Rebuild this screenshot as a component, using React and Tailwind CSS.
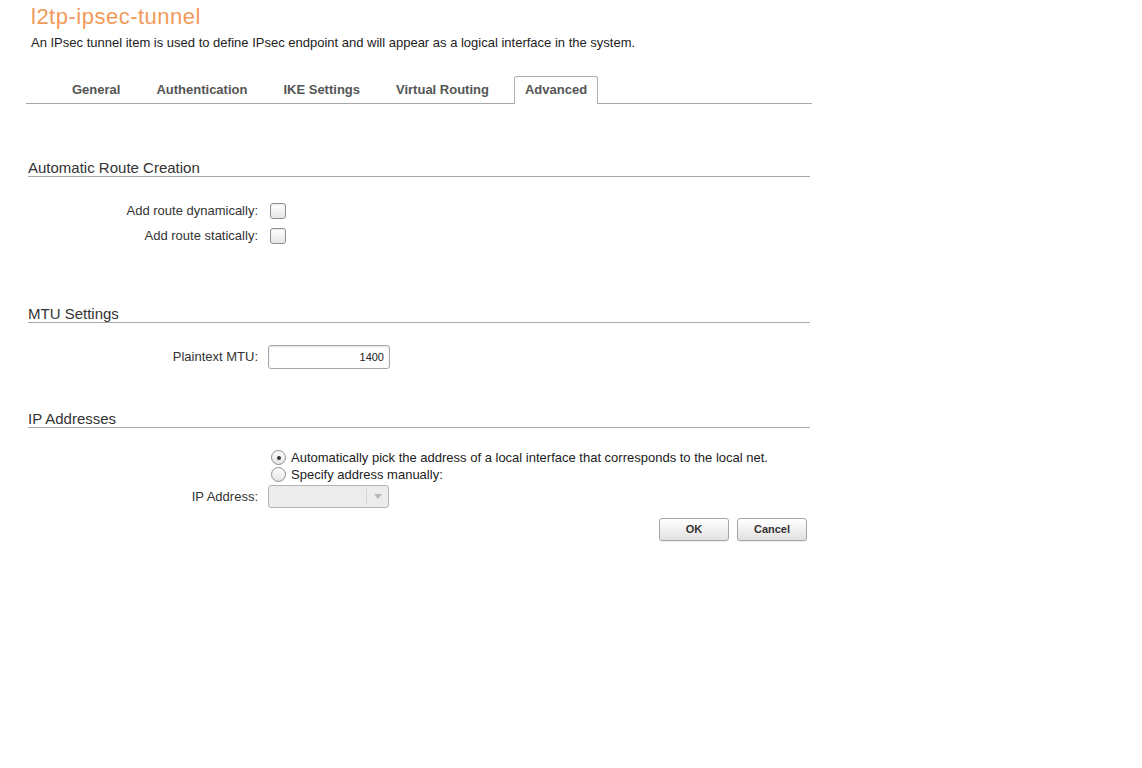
import React from 'react';

const font = { fontFamily: '"Liberation Sans", Arial, sans-serif' };

const tabs = ['General', 'Authentication', 'IKE Settings', 'Virtual Routing', 'Advanced'];

const Section = ({ title, className = '' }) => (
  <div className={`mx-[2px] h-[19px] border-b border-[#a8a8a8] text-[15px] leading-[20px] text-[#333] ${className}`}>
    {title}
  </div>
);

const Row = ({ label, children, className = '' }) => (
  <div className={`flex items-center ${className}`}>
    <div className="w-[232px] text-right text-[13px] text-[#333]">{label}</div>
    <div className="ml-[10px] flex items-center">{children}</div>
  </div>
);

const Checkbox = () => (
  <div className="ml-[2px] h-[16px] w-[16px] rounded-[3px] border border-[#8f8f8f] bg-gradient-to-b from-white to-[#e6e6e6] shadow-[inset_0_1px_1px_rgba(0,0,0,0.08)]" />
);

const Radio = ({ checked }) => (
  <div className="ml-[3px] flex h-[15px] w-[15px] items-center justify-center rounded-full border border-[#8f8f8f] bg-gradient-to-b from-white to-[#e4e4e4]">
    {checked && <div className="h-[4px] w-[4px] rounded-full bg-[#333]" />}
  </div>
);

const Button = ({ children }) => (
  <button className="h-[23px] w-[70px] rounded-[3px] border border-[#a6a6a6] bg-gradient-to-b from-white to-[#e2e2e2] text-[11px] font-bold text-[#333] shadow-[0_1px_1px_rgba(0,0,0,0.08)]">
    {children}
  </button>
);

export default function App() {
  return (
    <div className="min-h-screen w-[1142px] bg-white" style={font}>
      <h1 className="ml-[31px] pt-[3px] text-[22px] leading-[28px] tracking-[0.5px] text-[#f19a5b]">l2tp-ipsec-tunnel</h1>
      <p className="ml-[31px] mt-[4px] text-[13px] leading-[16px] text-[#222]">
        An IPsec tunnel item is used to define IPsec endpoint and will appear as a logical interface in the system.
      </p>

      <div className="ml-[26px] w-[786px]">
        {/* tabs */}
        <div className="mt-[25px] flex h-[28px] items-end gap-[14px] border-b border-[#a8a8a8] pl-[35px]">
          {tabs.map((t) =>
            t === 'Advanced' ? (
              <div
                key={t}
                className="-mb-px flex h-[28px] items-center rounded-t-[3px] border border-b-0 border-[#b0b0b0] bg-white px-[10px] pb-[2px] text-[13px] font-bold text-[#555]"
              >
                {t}
              </div>
            ) : (
              <div key={t} className="flex h-[27px] items-center px-[11px] text-[13px] font-bold text-[#555]">
                {t}
              </div>
            )
          )}
        </div>

        <Section title="Automatic Route Creation" className="mt-[54px]" />
        <div className="mt-[21px]">
          <Row label="Add route dynamically:" className="h-[25px]">
            <Checkbox />
          </Row>
          <Row label="Add route statically:" className="h-[25px]">
            <Checkbox />
          </Row>
        </div>

        <Section title="MTU Settings" className="mt-[56px]" />
        <Row label="Plaintext MTU:" className="mt-[22px] h-[24px]">
          <div className="flex h-[24px] w-[122px] items-center justify-end rounded-[3px] border border-[#a8a8a8] bg-white pr-[5px] text-[11px] text-[#222] shadow-[inset_0_1px_2px_rgba(0,0,0,0.12)]">
            1400
          </div>
        </Row>

        <Section title="IP Addresses" className="mt-[40px]" />
        <div className="mt-[21px] ml-[242px]">
          <div className="flex h-[17px] items-center gap-[5px] text-[13px] text-[#222]">
            <Radio checked />
            <span>Automatically pick the address of a local interface that corresponds to the local net.</span>
          </div>
          <div className="flex h-[17px] items-center gap-[5px] text-[13px] text-[#222]">
            <Radio />
            <span>Specify address manually:</span>
          </div>
        </div>
        <Row label="IP Address:" className="mt-[2px] h-[23px]">
          <div className="flex h-[23px] w-[121px] rounded-[3px] border border-[#b4b4b4] bg-[#ececec]">
            <div className="flex-1" />
            <div className="my-[3px] flex w-[22px] items-center justify-center border-l border-[#d4d4d4]">
              <svg width="8" height="5" viewBox="0 0 8 5">
                <path d="M0 0 L8 0 L4 5 Z" fill="#b8b8b8" />
              </svg>
            </div>
          </div>
        </Row>

        <div className="mt-[10px] flex justify-end gap-[8px] pr-[5px]">
          <Button>OK</Button>
          <Button>Cancel</Button>
        </div>
      </div>
    </div>
  );
}
